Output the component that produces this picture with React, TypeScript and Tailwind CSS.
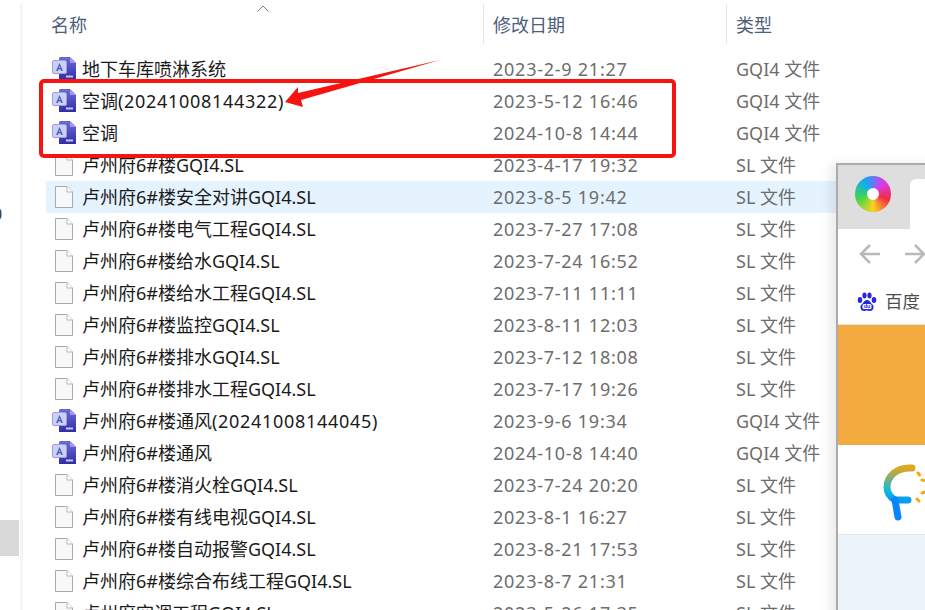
import React from 'react'

const files = [
  { name: '地下车库喷淋系统', date: '2023-2-9 21:27', type: 'GQI4 文件', gqi: true },
  { name: '空调(20241008144322)', date: '2023-5-12 16:46', type: 'GQI4 文件', gqi: true },
  { name: '空调', date: '2024-10-8 14:44', type: 'GQI4 文件', gqi: true },
  { name: '卢州府6#楼GQI4.SL', date: '2023-4-17 19:32', type: 'SL 文件' },
  { name: '卢州府6#楼安全对讲GQI4.SL', date: '2023-8-5 19:42', type: 'SL 文件', selected: true },
  { name: '卢州府6#楼电气工程GQI4.SL', date: '2023-7-27 17:08', type: 'SL 文件' },
  { name: '卢州府6#楼给水GQI4.SL', date: '2023-7-24 16:52', type: 'SL 文件' },
  { name: '卢州府6#楼给水工程GQI4.SL', date: '2023-7-11 11:11', type: 'SL 文件' },
  { name: '卢州府6#楼监控GQI4.SL', date: '2023-8-11 12:03', type: 'SL 文件' },
  { name: '卢州府6#楼排水GQI4.SL', date: '2023-7-12 18:08', type: 'SL 文件' },
  { name: '卢州府6#楼排水工程GQI4.SL', date: '2023-7-17 19:26', type: 'SL 文件' },
  { name: '卢州府6#楼通风(20241008144045)', date: '2023-9-6 19:34', type: 'GQI4 文件', gqi: true },
  { name: '卢州府6#楼通风', date: '2024-10-8 14:40', type: 'GQI4 文件', gqi: true },
  { name: '卢州府6#楼消火栓GQI4.SL', date: '2023-7-24 20:20', type: 'SL 文件' },
  { name: '卢州府6#楼有线电视GQI4.SL', date: '2023-8-1 16:27', type: 'SL 文件' },
  { name: '卢州府6#楼自动报警GQI4.SL', date: '2023-8-21 17:53', type: 'SL 文件' },
  { name: '卢州府6#楼综合布线工程GQI4.SL', date: '2023-8-7 21:31', type: 'SL 文件' },
  { name: '卢州府空调工程GQI4.SL', date: '2023-5-26 17:35', type: 'SL 文件' },
]

const GqiIcon = () => (
  <svg width="24" height="24" viewBox="0 0 24 24" className="shrink-0">
    <defs>
      <linearGradient id="doc" x1="0" y1="0" x2="0" y2="1">
        <stop offset="0" stopColor="#6c6cd8" />
        <stop offset="1" stopColor="#2f2ca8" />
      </linearGradient>
    </defs>
    <path d="M8 0h10l6 6v17H7V1z" fill="url(#doc)" />
    <path d="M18 0l6 6h-6z" fill="#9c9ce6" />
    <rect x="0.500" y="3.500" width="14" height="13" rx="1.500" fill="#ccd1f4" stroke="#9a9edd" />
    <path d="M7.500 6l3.500 8H9.200l-.5-1.600H6.300L5.800 14H4zM6.900 10.900h1.200L7.500 9z" fill="#4f5fd2" />
    <rect x="14" y="18.500" width="7" height="2" fill="#c5c6ee" />
  </svg>
)

const SlIcon = () => (
  <svg width="24" height="24" viewBox="0 0 24 24" className="shrink-0">
    <path d="M3.500 1.500h11.500l5.500 5.500v15.500h-17z" fill="#f7f8fa" stroke="#a9a9a9" />
    <path d="M15 1.500v5.500h5.500" fill="#fff" stroke="#b5b5b5" />
  </svg>
)

const BaiduPaw = () => (
  <svg width="20" height="20" viewBox="0 0 20 20" fill="#2529d8">
    <ellipse cx="3" cy="8" rx="2.300" ry="3" />
    <ellipse cx="7.500" cy="3.500" rx="2.100" ry="3" />
    <ellipse cx="12.500" cy="3.500" rx="2.100" ry="3" />
    <ellipse cx="17" cy="8" rx="2.300" ry="3" />
    <path d="M10 8c3 0 3.500 3 5.500 4.500 2 2 1 6.500-2.500 6.500-1.500 0-2-.5-3-.5s-1.500.5-3 .5C3.500 19 2.500 14.500 4.500 12.500 6.500 11 7 8 10 8z" />
    <rect x="5.500" y="12" width="9" height="5" rx="1.500" fill="#fff" />
    <text x="10" y="16.300" textAnchor="middle" fontSize="5.500" fontWeight="700" fontFamily="Liberation Sans, sans-serif">du</text>
  </svg>
)

const Logo = () => (
  <svg width="46" height="62" viewBox="0 0 46 62" fill="none" strokeLinecap="round">
    <defs>
      <linearGradient id="arc" x1="0" y1="0" x2="0" y2="1">
        <stop offset="0" stopColor="#e0a81c" />
        <stop offset="0.700" stopColor="#12b9dc" />
        <stop offset="1" stopColor="#0a9cf0" />
      </linearGradient>
    </defs>
    <path d="M30 7C14 6 5 16 5 26c0 6 3 10 8 13h13" stroke="url(#arc)" strokeWidth="7" />
    <path d="M13 39l3 17" stroke="#0a84fa" strokeWidth="7" />
    <path d="M36 12l1.500 2M40 19l3 .5M40 32l3-1M35 38l2 2" stroke="#f5a90f" strokeWidth="3" />
  </svg>
)

// digit runs in the reference font are wider than in Noto Sans
const FileName = ({ name }: { name: string }) => {
  const parts = name.split(/(\(\d+\))/)
  return (
    <span>
      {parts.map((part, i) =>
        part.startsWith('(') ? <span key={i} className="tracking-[0.7px]">{part}</span> : part
      )}
    </span>
  )
}

const App = () => {
  return (
    <div className="relative flex w-[925px] h-[610px] overflow-hidden bg-white text-[18px] font-['Noto_Sans','Noto_Sans_CJK_SC',sans-serif]">
      {/* left edge */}
      <div className="relative w-[23px] shrink-0 border-r-[3px] border-[#f5f5f5] mt-[4px]">
        <span className="absolute -left-[7px] top-[198px] text-[#333] text-[16px]">0</span>
        <div className="absolute left-0 top-[516px] w-[19px] h-[36px] bg-[#d9d9d9]" />
      </div>

      <div className="flex-1 pl-[23px]">
        {/* header */}
        <div className="relative grid grid-cols-[437px_243px_1fr] h-[53px] text-[#4c607a]">
          <div className="pl-[5px] pt-[12px] leading-[26px]">名称</div>
          <div className="mt-[4px] h-[40px] border-l border-[#e5e5e5] pl-[9px] pt-[8px] leading-[26px]">修改日期</div>
          <div className="mt-[4px] h-[40px] border-l border-[#e5e5e5] pl-[9px] pt-[8px] leading-[26px]">类型</div>
          <svg width="12" height="7" viewBox="0 0 12 7" className="absolute left-[211px] top-[5px]" fill="none" stroke="#777" strokeWidth="1">
            <path d="M0.500 6.500l5.500-5.500 5.500 5.500" />
          </svg>
        </div>

        {/* file rows */}
        {files.map((file) => (
          <div
            key={file.name}
            className={`grid grid-cols-[437px_243px_1fr] h-[32px] items-center ${file.selected ? 'bg-[#e5f3ff]' : ''}`}
          >
            <div className="flex items-center gap-[6px] pl-[6px] text-[#1a1a1a] whitespace-nowrap">
              {file.gqi ? <GqiIcon /> : <SlIcon />}
              <FileName name={file.name} />
            </div>
            <div className="pl-[10px] text-[#6d6d6d] whitespace-nowrap tracking-[0.75px]">{file.date}</div>
            <div className="pl-[10px] text-[#6d6d6d] whitespace-nowrap">{file.type}</div>
          </div>
        ))}
      </div>

      {/* annotation: red box and arrow */}
      <div className="absolute left-[39px] top-[79px] w-[637px] h-[79px] border-[4px] border-[#f5140f] rounded-[5px]" />
      <svg width="170" height="60" viewBox="0 0 170 60" className="absolute left-[280px] top-[56px]">
        <path d="M160 4L18 37l0-6L5 46l18 5-2-7z" fill="#f5140f" />
      </svg>

      {/* browser window on top */}
      <div className="absolute left-[836px] top-[163px] w-[100px] h-[460px] bg-white border-t-2 border-l-2 border-[#ababab] shadow-[-6px_0_10px_rgba(0,0,0,0.08)] flex flex-col">
        <div className="h-[64px] bg-[#dedede] relative shrink-0 pl-[17px] pt-[11px]">
          <div className="relative w-[36px] h-[36px] rounded-full blur-[0.6px] bg-[conic-gradient(from_330deg,#12a8f5,#d63df0_70deg,#f52a45_140deg,#fbd31f_210deg,#43d64a_280deg,#12a8f5)]">
            <div className="absolute left-[12px] top-[12px] w-[12px] h-[12px] rounded-full bg-white" />
          </div>
          <div className="absolute left-[72px] top-[14px] w-[40px] h-[50px] bg-white rounded-t-[6px]" />
          <div className="absolute left-[60px] top-[54px] w-[12px] h-[10px] bg-[#dedede] rounded-br-[6px]" />
        </div>
        <div className="h-[50px] flex items-center gap-[23px] pl-[21px] shrink-0">
          <svg width="22" height="22" viewBox="0 0 22 22" fill="none" stroke="#b9b9b9" strokeWidth="2.500"><path d="M21 11H2M11 2l-9 9 9 9" /></svg>
          <svg width="22" height="22" viewBox="0 0 22 22" fill="none" stroke="#b9b9b9" strokeWidth="2.500"><path d="M1 11h19M11 2l9 9-9 9" /></svg>
        </div>
        <div className="h-[46px] flex items-center gap-[8px] pl-[19px] text-[17.500px] text-[#4d4d4d] shrink-0 whitespace-nowrap border-b border-[#e5e5e5]">
          <BaiduPaw />
          <span>百度</span>
        </div>
        <div className="h-[120px] bg-[#f3aa3f] shrink-0" />
        <div className="h-[90px] pl-[44px] pt-[16px] shrink-0 border-b border-[#e3e3e3]">
          <Logo />
        </div>
        <div className="flex-1 bg-[#edf3fb]" />
      </div>
    </div>
  )
}

export default App
